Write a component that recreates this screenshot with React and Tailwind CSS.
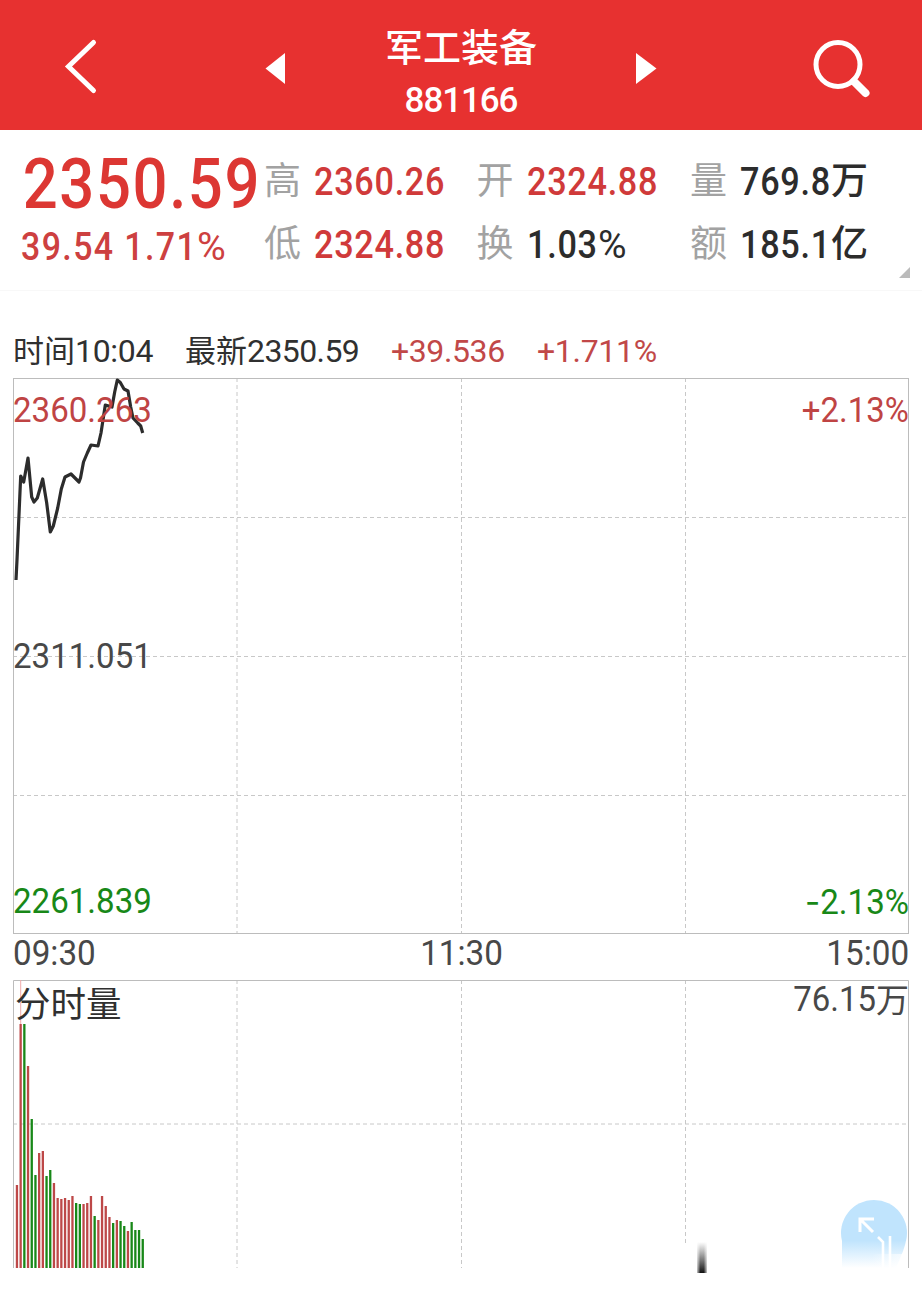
import clsx from "clsx";

const pricePoints =
  "16,580 17,560 20.7,476 23.7,482 28,458 31.7,497 34,502 37.3,498 42.7,479 46.7,503 50.3,532 53.3,526 57.7,508 61.3,489 65,477 71,474 74,477 79,482 80.5,478 83.5,462 87.3,453 91,445 98,446 101,433 105.3,405 112,407 114.7,392 117.3,380 120.3,382.5 124,389 128,391 130.7,407 133,418 137.7,423 140.7,426 142.7,433";

// [up or down, bar height]
const volumes = [
  ["r", 83], ["r", 244], ["g", 244], ["r", 202], ["g", 149],
  ["g", 93], ["r", 115], ["r", 117], ["g", 92], ["g", 98],
  ["r", 85], ["r", 70], ["r", 69], ["r", 70], ["r", 68],
  ["r", 72], ["g", 65], ["g", 64], ["r", 64], ["r", 65],
  ["r", 72], ["g", 52], ["r", 48], ["r", 72], ["r", 62],
  ["r", 51], ["g", 45], ["r", 48], ["g", 47], ["g", 42],
  ["r", 37], ["g", 46], ["g", 38], ["g", 38], ["g", 29],
];

const Header = () => {
  return (
    <header className="flex h-[130px] items-center bg-[#e73130] text-white">
      <svg className="h-[130px] w-[385px]" viewBox="0 0 385 130">
        <path
          d="M93.5 42.5L68.5 66.5L93.5 90.5"
          fill="none"
          stroke="white"
          strokeWidth="5"
          strokeLinecap="round"
        />
        <path d="M265.5 68.5L285 53V84Z" fill="white" />
      </svg>
      <div className="flex w-[152px] flex-col items-center pt-[19px]">
        <h1 className="h-[53px] whitespace-nowrap text-[38px] leading-[50px] font-medium">
          军工装备
        </h1>
        <p className="h-[56px] font-['Roboto'] text-[35px] leading-[56px] font-medium tracking-[-1.1px]">
          881166
        </p>
      </div>
      <svg className="h-[130px] w-[385px]" viewBox="537 0 385 130">
        <path d="M656.5 68.5L636 53V84Z" fill="white" />
        <circle cx="838" cy="64.5" r="22" fill="none" stroke="white" strokeWidth="5" />
        <path d="M854 81.5L865.5 93" stroke="white" strokeWidth="8" strokeLinecap="round" />
      </svg>
    </header>
  );
};

const Stat = ({ label, value, unit, red }) => {
  return (
    <div className="flex h-[63px] items-center whitespace-nowrap">
      <span className="w-[50px] shrink-0 pb-[7px] text-[37px] leading-none text-[#a2a2a2]">
        {label}
      </span>
      <span
        className={clsx(
          "origin-left scale-x-[0.9] font-['Roboto'] text-[38px] leading-none font-medium tracking-[0.8px]",
          red ? "text-[#d03a3a]" : "text-[#2c2c2c]"
        )}
      >
        {value}
      </span>
      {unit && (
        <span className="-ml-[10px] pb-[7px] text-[37px] leading-none font-medium text-[#2c2c2c]">
          {unit}
        </span>
      )}
    </div>
  );
};

const Summary = () => {
  return (
    <section className="relative flex h-[161px] border-b border-[#f8f8f8] pt-[20px] pl-[21px]">
      <div className="w-[243px] font-['Roboto'] font-medium text-[#dc3733]">
        <p className="h-[67px] origin-left scale-x-[0.88] whitespace-nowrap pl-[2px] text-[70px] leading-[69px] tracking-[1.8px]">
          2350.59
        </p>
        <p className="h-[60px] origin-left scale-x-[0.88] whitespace-nowrap text-[38.5px] leading-[60px] tracking-[1.6px] text-[#cd4040]">
          39.54 1.71<span className="inline-block origin-left scale-x-[1.16] font-normal">%</span>
        </p>
      </div>
      <div className="grid h-[126px] grid-cols-[212.5px_213.5px_220px]">
        <Stat label="高" value="2360.26" red />
        <Stat label="开" value="2324.88" red />
        <Stat label="量" value="769.8" unit="万" />
        <Stat label="低" value="2324.88" red />
        <Stat
          label="换"
          value={
            <>
              1.03<span className="inline-block origin-left scale-x-[1.14] font-normal">%</span>
            </>
          }
        />
        <Stat label="额" value="185.1" unit="亿" />
      </div>
      <svg className="absolute right-[12px] bottom-[12px] h-[11px] w-[11px]" viewBox="0 0 11 11">
        <path d="M11 0V11H0Z" fill="#bbb" />
      </svg>
    </section>
  );
};

const InfoRow = () => {
  return (
    <div className="flex h-[87px] items-center pt-[32px] pl-[13px] text-[31px] whitespace-nowrap text-[#303030]">
      <p className="w-[172px]">
        时间<span className="font-['Roboto'] text-[32px] tracking-[-0.3px]">10:04</span>
      </p>
      <p className="w-[206px]">
        最新<span className="font-['Roboto'] text-[32px] tracking-[-0.6px]">2350.59</span>
      </p>
      <p className="w-[146px] font-['Roboto'] text-[32px] tracking-[-0.4px] text-[#c14848]">
        +39.536
      </p>
      <p className="font-['Roboto'] text-[32px] tracking-[-0.3px] text-[#c14848]">+1.711%</p>
    </div>
  );
};

const PriceChart = () => {
  return (
    <div className="relative mx-[13px] h-[556px] font-['Roboto'] text-[35px] leading-none">
      <svg className="h-[556px] w-[896px]" viewBox="13 378 896 556">
        <g stroke="#c8c8c8" strokeDasharray="4 3">
          <path d="M237 378V934M461.5 378V934M685.5 378V934" />
          <path d="M13 517.5H909M13 656.5H909M13 795.5H909" />
        </g>
        <rect x="13.5" y="378.5" width="895" height="555" fill="none" stroke="#bcbcbc" />
        <polyline
          points={pricePoints}
          fill="none"
          stroke="#2c2c2c"
          strokeWidth="3.2"
          strokeLinejoin="round"
        />
      </svg>
      <div className="absolute inset-0 flex flex-col justify-between pt-[15px] pb-[14px]">
        <div className="flex justify-between text-[#bf4444]">
          <span className="origin-left scale-x-[0.945]">2360.263</span>
          <span className="origin-right scale-x-[0.94]">+2.13%</span>
        </div>
        <span className="origin-left scale-x-[0.945] text-[#484848]">2311.051</span>
        <div className="flex justify-between text-[#188818]">
          <span className="origin-left scale-x-[0.945]">2261.839</span>
          <span className="origin-right scale-x-[0.945]">
            <span className="font-['Inter']">-</span>2.13%
          </span>
        </div>
      </div>
    </div>
  );
};

const TimeAxis = () => {
  return (
    <div className="mx-[13px] flex h-[46px] justify-between font-['Roboto'] text-[35px] leading-[40px] text-[#484848]">
      <span className="origin-left scale-x-[0.95]">09:30</span>
      <span className="scale-x-[0.95] pl-[2px]">11:30</span>
      <span className="origin-right scale-x-[0.95]">15:00</span>
    </div>
  );
};

const VolumeChart = () => {
  return (
    <div className="relative mx-[13px] h-[312px]">
      <svg className="h-[312px] w-[896px]" viewBox="13 980 896 312">
        <defs>
          <linearGradient id="fade" x1="0" y1="0" x2="0" y2="1">
            <stop offset="0" stopColor="#c0e4fd" />
            <stop offset="1" stopColor="#fff" />
          </linearGradient>
          <linearGradient id="smear" x1="0" y1="0" x2="0" y2="1">
            <stop offset="0" stopColor="#222" stopOpacity="0" />
            <stop offset="1" stopColor="#111" stopOpacity="1" />
          </linearGradient>
          <linearGradient id="smearEdge">
            <stop offset="0" stopColor="#fff" stopOpacity="1" />
            <stop offset="0.35" stopColor="#fff" stopOpacity="0" />
            <stop offset="0.65" stopColor="#fff" stopOpacity="0" />
            <stop offset="1" stopColor="#fff" stopOpacity="1" />
          </linearGradient>
          <linearGradient id="sideFade">
            <stop offset="0" stopColor="#fff" stopOpacity="0" />
            <stop offset="1" stopColor="#fff" stopOpacity="0.8" />
          </linearGradient>
        </defs>
        <g stroke="#c8c8c8" strokeDasharray="4 3">
          <path d="M237 980V1268M461.5 980V1268M685.5 980V1246" />
          <path d="M13 1124H909" />
        </g>
        <path d="M13.5 1268V980.5H908.5V1268" fill="none" stroke="#bcbcbc" />
        <path d="M20.7 980V1024" stroke="#f0aaaa" />
        {volumes.map(([dir, h], i) => (
          <rect
            key={i}
            x={15.8 + i * 3.7}
            y={1268 - h}
            width="2.3"
            height={h}
            fill={dir === "r" ? "#bd4848" : "#188818"}
          />
        ))}
        {/* floating shrink button, its lower part fades out */}
        <path d="M842 1241A33 33 0 1 1 906 1241Z" fill="#c0e4fd" />
        <path d="M842 1240.5H906C905 1247 902 1254 896 1268H842Z" fill="url(#fade)" />
        <path d="M872 1254H908V1268H872Z" fill="url(#sideFade)" />
        <g stroke="white" fill="none">
          <path d="M860 1232V1219H874M860 1219L873 1232" strokeWidth="3" />
          <path d="M878 1237L883 1242V1268M890 1236V1268" strokeWidth="2.6" />
        </g>
        <rect x="697" y="1242" width="10" height="31" fill="url(#smear)" />
        <rect x="696" y="1242" width="12" height="31" fill="url(#smearEdge)" />
      </svg>
      <div className="absolute inset-x-0 top-0 flex justify-between">
        <span className="pl-[2px] text-[35.5px] leading-[44px] text-[#303030]">分时量</span>
        <span className="flex text-[33px] leading-[36px] text-[#484848]">
          <span className="origin-right scale-x-[0.94] font-['Roboto'] text-[35px] leading-[40px]">
            76.15
          </span>
          万
        </span>
      </div>
    </div>
  );
};

const App = () => {
  return (
    <div className="h-[1292px] w-[922px] overflow-hidden bg-white font-['Noto_Sans_CJK_SC',sans-serif]">
      <Header />
      <Summary />
      <InfoRow />
      <PriceChart />
      <TimeAxis />
      <VolumeChart />
    </div>
  );
};

export default App;
